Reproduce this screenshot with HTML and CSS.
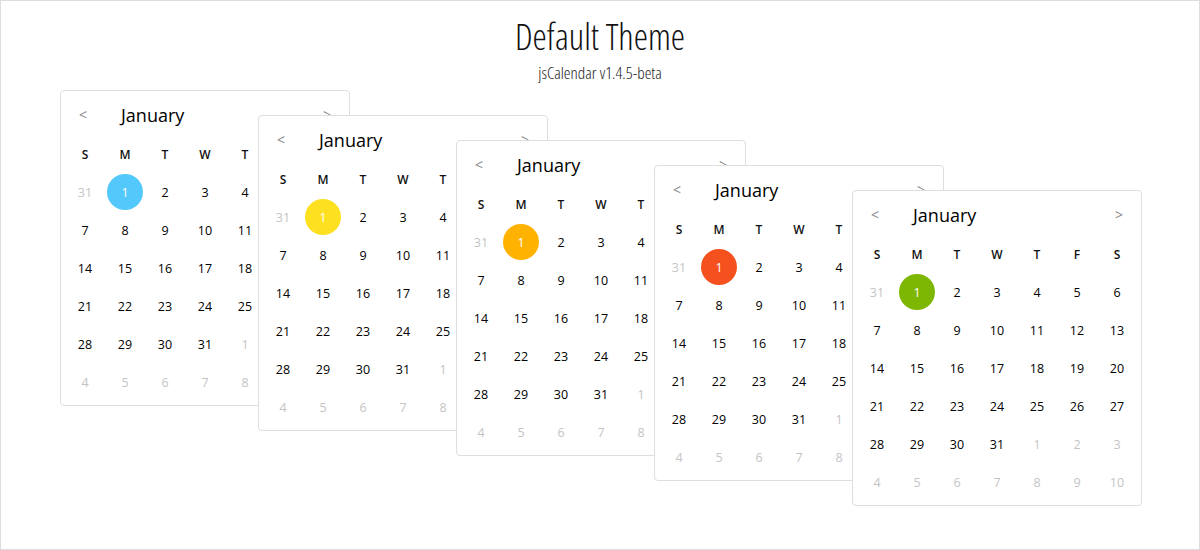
FILE: index.html
```html
<!DOCTYPE html>
<html lang="en">
<head>
<meta charset="utf-8">
<title>jsCalendar - Default Theme</title>
<link rel="stylesheet" href="styles.css">
</head>
<body>
<div class="page">
  <header class="intro">
    <h1 class="intro-title">Default Theme</h1>
    <p class="intro-sub">jsCalendar v1.4.5-beta</p>
  </header>
  <div class="stack">
    <div class="cal cal-1 theme-blue">
      <div class="cal-head"><span class="nav">&lt;</span><span class="month">January</span><span class="nav nav-right">&gt;</span></div>
      <div class="grid">
        <span class="wd">S</span><span class="wd">M</span><span class="wd">T</span><span class="wd">W</span><span class="wd">T</span><span class="wd">F</span><span class="wd">S</span>
        <span class="d out">31</span><span class="d cur">1</span><span class="d">2</span><span class="d">3</span><span class="d">4</span><span class="d">5</span><span class="d">6</span>
        <span class="d">7</span><span class="d">8</span><span class="d">9</span><span class="d">10</span><span class="d">11</span><span class="d">12</span><span class="d">13</span>
        <span class="d">14</span><span class="d">15</span><span class="d">16</span><span class="d">17</span><span class="d">18</span><span class="d">19</span><span class="d">20</span>
        <span class="d">21</span><span class="d">22</span><span class="d">23</span><span class="d">24</span><span class="d">25</span><span class="d">26</span><span class="d">27</span>
        <span class="d">28</span><span class="d">29</span><span class="d">30</span><span class="d">31</span><span class="d out">1</span><span class="d out">2</span><span class="d out">3</span>
        <span class="d out">4</span><span class="d out">5</span><span class="d out">6</span><span class="d out">7</span><span class="d out">8</span><span class="d out">9</span><span class="d out">10</span>
      </div>
    </div>
    <div class="cal cal-2 theme-yellow">
      <div class="cal-head"><span class="nav">&lt;</span><span class="month">January</span><span class="nav nav-right">&gt;</span></div>
      <div class="grid">
        <span class="wd">S</span><span class="wd">M</span><span class="wd">T</span><span class="wd">W</span><span class="wd">T</span><span class="wd">F</span><span class="wd">S</span>
        <span class="d out">31</span><span class="d cur">1</span><span class="d">2</span><span class="d">3</span><span class="d">4</span><span class="d">5</span><span class="d">6</span>
        <span class="d">7</span><span class="d">8</span><span class="d">9</span><span class="d">10</span><span class="d">11</span><span class="d">12</span><span class="d">13</span>
        <span class="d">14</span><span class="d">15</span><span class="d">16</span><span class="d">17</span><span class="d">18</span><span class="d">19</span><span class="d">20</span>
        <span class="d">21</span><span class="d">22</span><span class="d">23</span><span class="d">24</span><span class="d">25</span><span class="d">26</span><span class="d">27</span>
        <span class="d">28</span><span class="d">29</span><span class="d">30</span><span class="d">31</span><span class="d out">1</span><span class="d out">2</span><span class="d out">3</span>
        <span class="d out">4</span><span class="d out">5</span><span class="d out">6</span><span class="d out">7</span><span class="d out">8</span><span class="d out">9</span><span class="d out">10</span>
      </div>
    </div>
    <div class="cal cal-3 theme-orange">
      <div class="cal-head"><span class="nav">&lt;</span><span class="month">January</span><span class="nav nav-right">&gt;</span></div>
      <div class="grid">
        <span class="wd">S</span><span class="wd">M</span><span class="wd">T</span><span class="wd">W</span><span class="wd">T</span><span class="wd">F</span><span class="wd">S</span>
        <span class="d out">31</span><span class="d cur">1</span><span class="d">2</span><span class="d">3</span><span class="d">4</span><span class="d">5</span><span class="d">6</span>
        <span class="d">7</span><span class="d">8</span><span class="d">9</span><span class="d">10</span><span class="d">11</span><span class="d">12</span><span class="d">13</span>
        <span class="d">14</span><span class="d">15</span><span class="d">16</span><span class="d">17</span><span class="d">18</span><span class="d">19</span><span class="d">20</span>
        <span class="d">21</span><span class="d">22</span><span class="d">23</span><span class="d">24</span><span class="d">25</span><span class="d">26</span><span class="d">27</span>
        <span class="d">28</span><span class="d">29</span><span class="d">30</span><span class="d">31</span><span class="d out">1</span><span class="d out">2</span><span class="d out">3</span>
        <span class="d out">4</span><span class="d out">5</span><span class="d out">6</span><span class="d out">7</span><span class="d out">8</span><span class="d out">9</span><span class="d out">10</span>
      </div>
    </div>
    <div class="cal cal-4 theme-red">
      <div class="cal-head"><span class="nav">&lt;</span><span class="month">January</span><span class="nav nav-right">&gt;</span></div>
      <div class="grid">
        <span class="wd">S</span><span class="wd">M</span><span class="wd">T</span><span class="wd">W</span><span class="wd">T</span><span class="wd">F</span><span class="wd">S</span>
        <span class="d out">31</span><span class="d cur">1</span><span class="d">2</span><span class="d">3</span><span class="d">4</span><span class="d">5</span><span class="d">6</span>
        <span class="d">7</span><span class="d">8</span><span class="d">9</span><span class="d">10</span><span class="d">11</span><span class="d">12</span><span class="d">13</span>
        <span class="d">14</span><span class="d">15</span><span class="d">16</span><span class="d">17</span><span class="d">18</span><span class="d">19</span><span class="d">20</span>
        <span class="d">21</span><span class="d">22</span><span class="d">23</span><span class="d">24</span><span class="d">25</span><span class="d">26</span><span class="d">27</span>
        <span class="d">28</span><span class="d">29</span><span class="d">30</span><span class="d">31</span><span class="d out">1</span><span class="d out">2</span><span class="d out">3</span>
        <span class="d out">4</span><span class="d out">5</span><span class="d out">6</span><span class="d out">7</span><span class="d out">8</span><span class="d out">9</span><span class="d out">10</span>
      </div>
    </div>
    <div class="cal cal-5 theme-green">
      <div class="cal-head"><span class="nav">&lt;</span><span class="month">January</span><span class="nav nav-right">&gt;</span></div>
      <div class="grid">
        <span class="wd">S</span><span class="wd">M</span><span class="wd">T</span><span class="wd">W</span><span class="wd">T</span><span class="wd">F</span><span class="wd">S</span>
        <span class="d out">31</span><span class="d cur">1</span><span class="d">2</span><span class="d">3</span><span class="d">4</span><span class="d">5</span><span class="d">6</span>
        <span class="d">7</span><span class="d">8</span><span class="d">9</span><span class="d">10</span><span class="d">11</span><span class="d">12</span><span class="d">13</span>
        <span class="d">14</span><span class="d">15</span><span class="d">16</span><span class="d">17</span><span class="d">18</span><span class="d">19</span><span class="d">20</span>
        <span class="d">21</span><span class="d">22</span><span class="d">23</span><span class="d">24</span><span class="d">25</span><span class="d">26</span><span class="d">27</span>
        <span class="d">28</span><span class="d">29</span><span class="d">30</span><span class="d">31</span><span class="d out">1</span><span class="d out">2</span><span class="d out">3</span>
        <span class="d out">4</span><span class="d out">5</span><span class="d out">6</span><span class="d out">7</span><span class="d out">8</span><span class="d out">9</span><span class="d out">10</span>
      </div>
    </div>
  </div>
</div>
</body>
</html>
```
FILE: styles.css
```css
html, body {
  margin: 0;
  padding: 0;
  background: #ffffff;
}

.page {
  box-sizing: border-box;
  width: 1200px;
  height: 550px;
  border: 1px solid #dddddd;
  overflow: hidden;
  font-family: "Open Sans", "Noto Sans", sans-serif;
  color: #000000;
}

.intro {
  text-align: center;
  padding-top: 14px;
  height: 89px;
  box-sizing: border-box;
}

.intro-title {
  margin: 0;
  font-family: "Open Sans", sans-serif;
  font-weight: 300;
  font-stretch: 75%;
  font-size: 36px;
  line-height: 44px;
  color: #111111;
}

.intro-sub {
  margin: 3px 0 0;
  font-family: "Open Sans", sans-serif;
  font-weight: 300;
  font-stretch: 75%;
  font-size: 17px;
  line-height: 22px;
  color: #222222;
}

.stack {
  display: flex;
  align-items: flex-start;
  padding-left: 59px;
}

.cal {
  box-sizing: border-box;
  width: 290px;
  flex: none;
  background: #ffffff;
  border: 1px solid #dedede;
  border-radius: 4px;
  padding: 4px 6px 5px;
  margin-left: -92px;
}

.cal-1 { margin-left: 0; margin-top: 0; }
.cal-2 { margin-top: 25px; }
.cal-3 { margin-top: 50px; }
.cal-4 { margin-top: 75px; }
.cal-5 { margin-top: 100px; }

.cal-head {
  display: flex;
  align-items: center;
  height: 39px;
  padding-top: 1px;
  box-sizing: border-box;
  margin-bottom: 2px;
}

.nav {
  width: 32px;
  text-align: center;
  font-size: 14px;
  color: #8a8a8a;
  line-height: 20px;
}

.month {
  flex: 1;
  margin-left: 22px;
  font-size: 18px;
  line-height: 24px;
  color: #000000;
}

.grid {
  display: grid;
  grid-template-columns: repeat(7, 36px);
  grid-auto-rows: 36px;
  column-gap: 4px;
  row-gap: 2px;
}

.wd, .d {
  display: flex;
  align-items: center;
  justify-content: center;
  border-radius: 50%;
  font-size: 12.5px;
}

.wd {
  font-weight: 600;
  font-size: 12px;
  color: #111111;
}

.d { color: #000000; }

.d.out { color: #c4c4c4; }

.d.cur { color: #ffffff; }

.theme-blue .cur { background: #53c8fb; }
.theme-yellow .cur { background: #fde01f; }
.theme-orange .cur { background: #ffb300; }
.theme-red .cur { background: #f4511e; }
.theme-green .cur { background: #7db703; }
```
